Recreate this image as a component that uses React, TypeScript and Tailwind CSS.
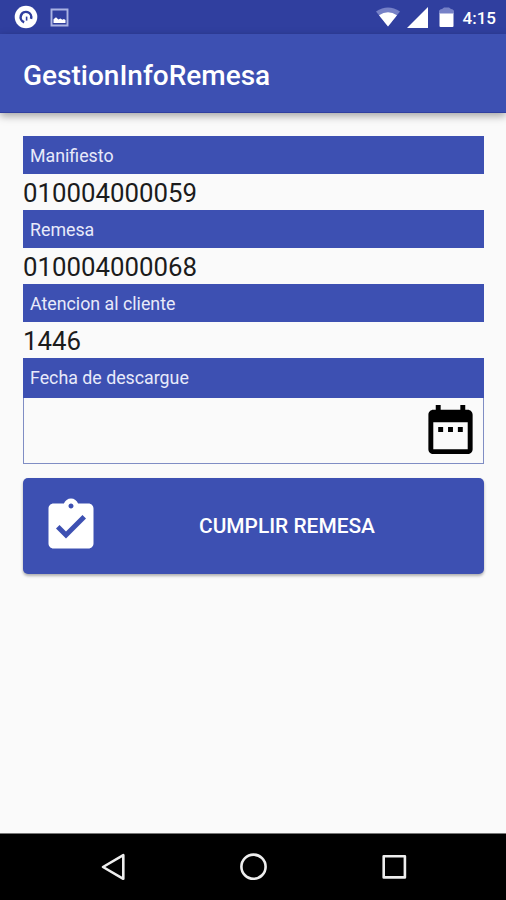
type FieldProps = {
  label: string;
  value: string;
};

const fields: FieldProps[] = [
  { label: 'Manifiesto', value: '010004000059' },
  { label: 'Remesa', value: '010004000068' },
  { label: 'Atencion al cliente', value: '1446' },
];

function StatusBar() {
  return (
    <div className="flex h-[34px] shrink-0 items-center justify-between bg-[#303f9f] pr-[10px] pl-[14px] text-white">
      <div className="flex items-center gap-3">
        <svg className="h-6 w-6" viewBox="0 0 24 24" fill="none">
          <circle cx="12" cy="12" r="11.3" fill="#fff" />
          <path d="M10.2 17.2A5.3 5.3 0 1 1 17 13.8" stroke="#303f9f" strokeWidth="2.5" />
          <path d="M12.6 11.6v4" stroke="#303f9f" strokeWidth="1.6" />
        </svg>
        <svg className="h-[19px] w-[19px]" viewBox="0 0 19 19" fill="none">
          <path d="M1.5 1.5h16v16h-16z" stroke="#aab3e3" strokeWidth="1.9" />
          <path d="M3.5 15v-3.8L6 9.200l2.400 2.200 2-1 2 1.300 1.500-.8L15.500 12v3z" fill="#fff" />
        </svg>
      </div>
      <div className="flex items-center">
        <svg className="h-5 w-6" viewBox="0 0 24 20">
          <path d="M0 4.5Q12-3.5 24 4.5L12 19.5z" fill="#7681c7" />
          <path d="M3 8.2Q12 2.2 21 8.2L12 19.5z" fill="#fff" />
        </svg>
        <svg className="ml-[7px] h-[21px] w-[21px]" viewBox="0 0 21 21">
          <path d="M21 0v21H0z" fill="#fff" />
        </svg>
        <svg className="ml-[11px] h-5 w-[15px]" viewBox="0 0 15 20">
          <path d="M0 7V4.5Q0 2.5 3 2L5 .5h5l2 1.5q3 .5 3 2.5V7z" fill="#7681c7" />
          <path d="M.5 6.5h14v12.5q0 1-1 1h-12q-1 0-1-1z" fill="#fff" />
        </svg>
        <span className="ml-[9px] pt-[2px] text-[17px] leading-none font-medium">4:15</span>
      </div>
    </div>
  );
}

function Field({ label, value }: FieldProps) {
  return (
    <div>
      <div className="flex h-[38px] items-center bg-[#3d50b2] pt-px pl-[7px] text-[17.8px] leading-none text-[#e8eafa]">{label}</div>
      <div className="flex h-9 items-center pt-1 text-[25.8px] leading-none text-[#1c1c1c]">{value}</div>
    </div>
  );
}

function NavigationBar() {
  return (
    <div className="flex h-[67px] shrink-0 items-center justify-between border-t border-[#777] bg-black pr-[98px] pl-[100px]">
      <svg className="h-7 w-7" viewBox="0 0 28 28" fill="none" stroke="#eee" strokeWidth="2.6" strokeLinejoin="round">
        <path d="M23.3 2.2v23.6L3 14z" />
      </svg>
      <svg className="h-7 w-7" viewBox="0 0 28 28" fill="none" stroke="#eee" strokeWidth="2.6">
        <circle cx="13.5" cy="13.7" r="12.1" />
      </svg>
      <svg className="h-7 w-7" viewBox="0 0 28 28" fill="none" stroke="#eee" strokeWidth="2.6" strokeLinejoin="round">
        <path d="M3.7 3.2h21.2v21.2H3.7z" />
      </svg>
    </div>
  );
}

export default function App() {
  return (
    <div className="flex h-[900px] w-[506px] flex-col overflow-hidden bg-[#fafafa] font-['Roboto',sans-serif]">
      <StatusBar />
      <header className="flex h-[79px] shrink-0 items-center border-b border-[#303f9f] bg-[#3d50b2] pt-[5px] pl-[23px] shadow-[0_3px_8px_rgba(0,0,0,0.35)]">
        <h1 className="text-[28px] leading-none font-medium text-white">GestionInfoRemesa</h1>
      </header>

      <main className="flex flex-1 flex-col pt-[23px] pr-[22px] pl-[23px]">
        {fields.map((field) => (
          <Field key={field.label} label={field.label} value={field.value} />
        ))}

        {/* Unloading date */}
        <div className="flex h-10 items-center bg-[#3d50b2] pb-px pl-[7px] text-[17.8px] leading-none text-[#e8eafa]">Fecha de descargue</div>
        <div className="flex h-[66px] justify-end border border-t-0 border-[#7f8dc4] pt-[2px] pr-[3px]">
          <svg className="h-[59px] w-[59px]" viewBox="0 0 24 24" fill="#000">
            <path d="M9 11H7v2h2v-2zm4 0h-2v2h2v-2zm4 0h-2v2h2v-2zm2-7h-1V2h-2v2H8V2H6v2H5c-1.11 0-1.99.9-1.99 2L3 20c0 1.1.89 2 2 2h14c1.1 0 2-.9 2-2V6c0-1.1-.9-2-2-2zm0 16H5V9h14v11z" />
          </svg>
        </div>

        <button className="mt-[14px] flex h-24 items-center rounded-[5px] bg-[#3d50b2] pl-[18px] text-white shadow-[0_2px_3px_rgba(0,0,0,0.3)]">
          <svg className="h-[60px] w-[60px] shrink-0" viewBox="0 0 24 24" fill="#fff">
            <path d="M19 3h-4.18C14.4 1.84 13.3 1 12 1c-1.3 0-2.4.84-2.82 2H5c-1.1 0-2 .9-2 2v14c0 1.1.9 2 2 2h14c1.1 0 2-.9 2-2V5c0-1.1-.9-2-2-2zm-7 0c.55 0 1 .45 1 1s-.45 1-1 1-1-.45-1-1 .45-1 1-1zm-2 14l-4-4 1.41-1.41L10 14.17l6.59-6.59L18 9l-8 8z" />
          </svg>
          <span className="flex-1 pt-[2px] pr-[14px] pl-[3px] text-center text-[20.9px] font-medium">CUMPLIR REMESA</span>
        </button>
      </main>

      <NavigationBar />
    </div>
  );
}
